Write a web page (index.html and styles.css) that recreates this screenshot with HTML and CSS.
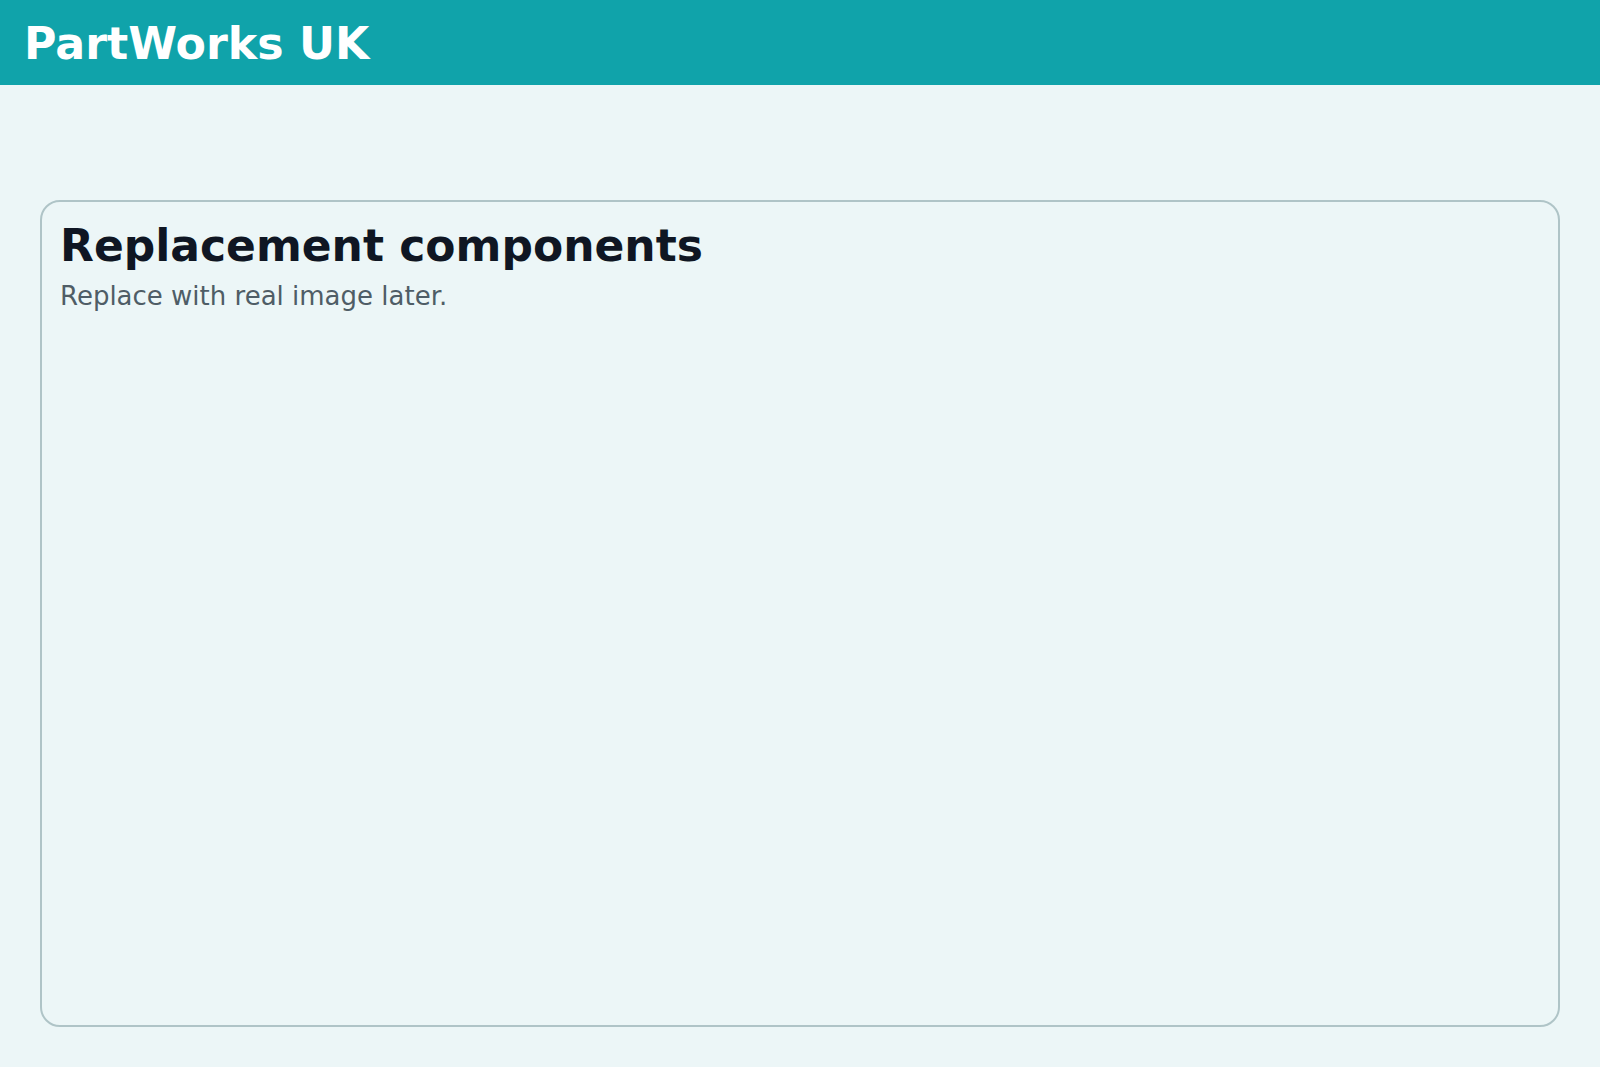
FILE: index.html
```html
<!DOCTYPE html>
<html lang="en">
<head>
<meta charset="utf-8">
<title>PartWorks UK</title>
<link rel="stylesheet" href="styles.css">
</head>
<body>
<header class="topbar">
  <h1 class="brand">PartWorks UK</h1>
</header>
<main class="page">
  <section class="card">
    <h2 class="card-title">Replacement components</h2>
    <p class="card-note">Replace with real image later.</p>
  </section>
</main>
</body>
</html>
```
FILE: styles.css
```css
html, body {
  margin: 0;
  padding: 0;
}
body {
  background: #ecf6f7;
  font-family: "DejaVu Sans", "Liberation Sans", sans-serif;
}
.topbar {
  box-sizing: border-box;
  height: 85px;
  background: #10a3aa;
  padding: 18px 24px 0;
}
.brand {
  margin: 0;
  font-size: 44.3px;
  font-weight: bold;
  line-height: normal;
  color: #ffffff;
}
.page {
  padding: 115px 40px 40px;
}
.card {
  box-sizing: border-box;
  height: 827px;
  border: 2px solid #afc4c7;
  border-radius: 20px;
  padding: 18px 18px;
}
.card-title {
  margin: 0;
  font-size: 44px;
  font-weight: bold;
  line-height: normal;
  color: #0f1623;
}
.card-note {
  margin: 10px 0 0;
  font-size: 26px;
  line-height: normal;
  color: #4f5d66;
}
```
